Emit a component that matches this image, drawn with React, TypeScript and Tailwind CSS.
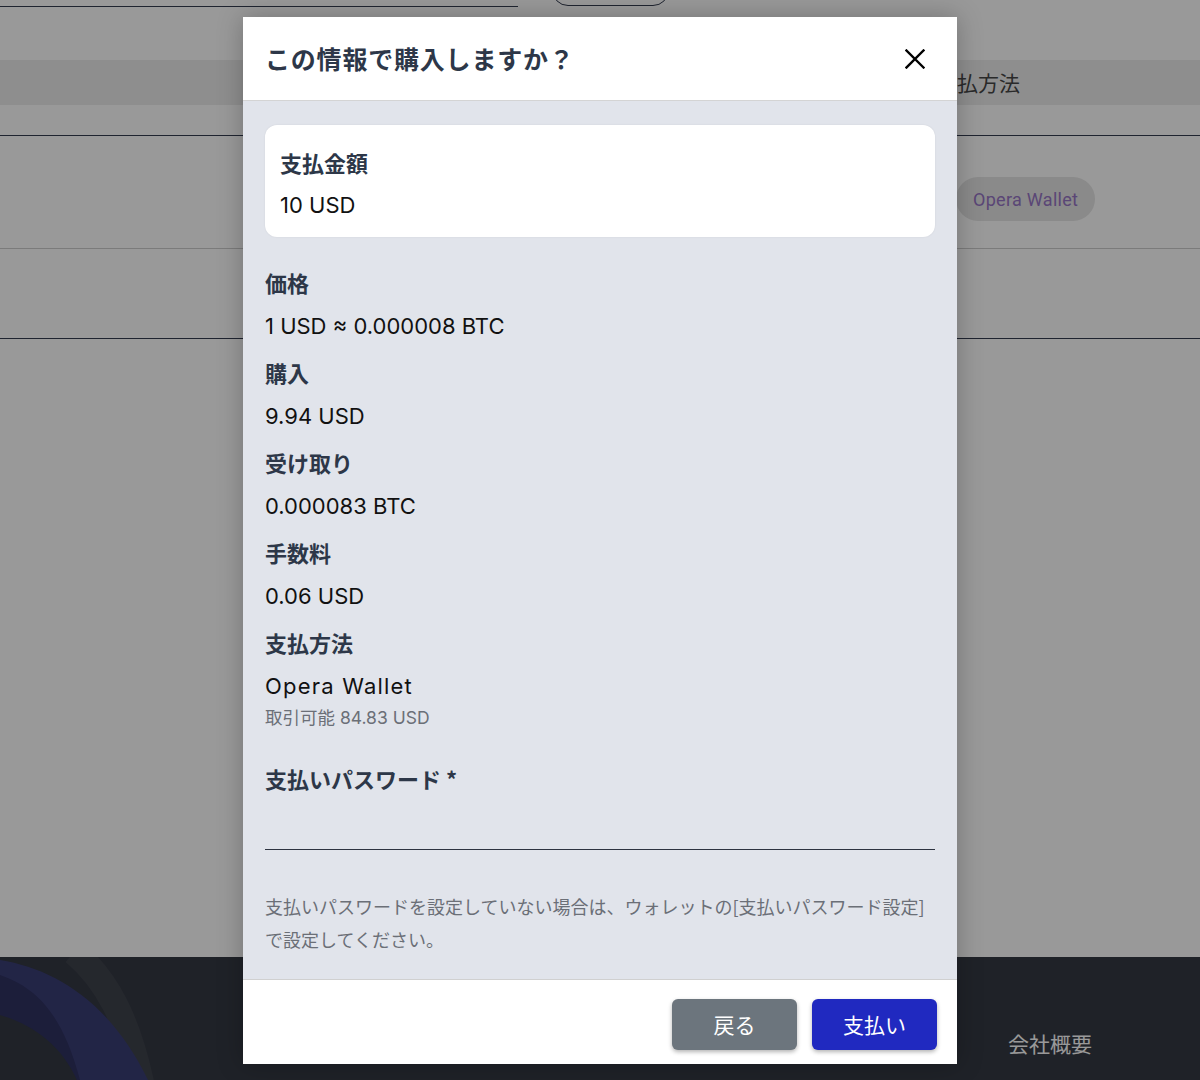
import React from "react";

const jp = "font-['Noto_Sans_CJK_JP',sans-serif]";
const val = "font-['Inter','Noto_Sans_CJK_JP',sans-serif]";

function Item({ label, value }: { label: string; value: string }) {
  return (
    <div className="flex flex-col">
      <div className={`${jp} text-[22px] leading-[30px] font-bold text-[#2d3748]`}>{label}</div>
      <div className={`${val} mt-[14px] text-[22px] leading-[30px] text-[#111111]`}>{value}</div>
    </div>
  );
}

export default function App() {
  return (
    <div className="relative h-[1080px] w-[1200px] overflow-hidden bg-white">
      {/* background page */}
      <main className="flex h-[957px] flex-col">
        <div className="flex h-[60px] items-start">
          <div className="h-[7px] w-[518px] border-b-[1.5px] border-[#343c50]" />
          <div className="ml-[34px] mt-[-34px] h-[40px] w-[117px] rounded-[16px] border-[1.5px] border-[#343c50]" />
        </div>
        <div className={`${jp} flex h-[45px] items-center bg-[#ededed] pl-[936px] text-[21px] text-[#474747]`}>
          支払方法
        </div>
        <div className="h-[30px]" />
        <div className="flex h-[113px] items-start border-t-[1.5px] border-[#343c50]">
          <div className="ml-[956px] mt-[41px] flex h-[44px] items-center rounded-full bg-[#e6e6e6] px-[17px] font-['Roboto',sans-serif] text-[18px] tracking-[0.3px] text-[#9675c5]">
            Opera Wallet
          </div>
        </div>
        <div className="h-[90px] border-t-[1.5px] border-[#cdcdcd]" />
        <div className="border-t-[1.5px] border-[#343c50]" />
      </main>
      <footer className="relative h-[123px] bg-[#343944]">
        <svg className="absolute left-0 top-0" width="260" height="123" viewBox="0 0 260 123">
          <path d="M74 -5 C106 22 128 62 142 130" stroke="#3f434c" strokeWidth="26" fill="none" />
          <path d="M0 3 C55 12 110 45 148 123 L0 123 Z" fill="#3a3e76" />
          <path d="M0 18 C35 30 62 55 80 123 L0 123 Z" fill="#2f3262" />
          <path d="M0 58 C35 68 62 90 77 123 L0 123 Z" fill="#343944" />
        </svg>
        <div className={`${jp} relative flex h-full items-center pl-[1008px] pt-[50px] text-[21px] text-white`}>
          会社概要
        </div>
      </footer>

      {/* overlay */}
      <div className="absolute inset-0 bg-black/40" />

      {/* modal */}
      <div className="absolute left-[243px] top-[17px] flex w-[714px] flex-col overflow-hidden bg-white shadow-[0_0_24px_rgba(0,0,0,0.25)]">
        <div className="flex h-[84px] items-center justify-between border-b-[1.5px] border-[#d4d4d4] pl-[22px] pr-[32px]">
          <div className={`${jp} text-[25px] font-bold tracking-[0.8px] text-[#2d3748]`}>この情報で購入しますか？</div>
          <svg width="20" height="20" viewBox="0 0 20 20">
            <path d="M1.5 1.5 L18.5 18.5 M18.5 1.5 L1.5 18.5" stroke="#000" strokeWidth="2.4" strokeLinecap="square" />
          </svg>
        </div>
        <div className="flex flex-col bg-[#e1e4eb] px-[22px] pb-[23px] pt-[24px]">
          <div className="flex flex-col rounded-[12px] bg-white px-[15px] pb-[17px] pt-[22px] shadow-[0_0_2px_rgba(0,0,0,0.08)]">
            <div className={`${jp} text-[22px] leading-[30px] font-bold text-[#2d3748]`}>支払金額</div>
            <div className={`${val} mt-[13px] text-[22px] leading-[30px] text-[#111111]`}>10 USD</div>
          </div>
          <div className="mt-[30px] flex flex-col gap-[16px]">
            <Item label="価格" value="1 USD ≈ 0.000008 BTC" />
            <Item label="購入" value="9.94 USD" />
            <Item label="受け取り" value="0.000083 BTC" />
            <Item label="手数料" value="0.06 USD" />
            <div className="flex flex-col">
              <div className={`${jp} text-[22px] leading-[30px] font-bold text-[#2d3748]`}>支払方法</div>
              <div className={`${val} mt-[14px] text-[22px] leading-[30px] tracking-[1.2px] text-[#111111]`}>Opera Wallet</div>
              <div className={`${val} mt-[2px] text-[17.5px] leading-[30px] text-[#6b6f77]`}>取引可能 84.83 USD</div>
            </div>
          </div>
          <div className={`${jp} mt-[30px] text-[22px] leading-[30px] font-bold text-[#2d3748]`}>支払いパスワード *</div>
          <div className="h-[57px] border-b-[1.5px] border-[#2d3340]" />
          <div className={`${jp} mt-[40px] text-[18px] leading-[33px] text-[#6b6f77]`}>
            支払いパスワードを設定していない場合は、ウォレットの[支払いパスワード設定]
            <br />
            で設定してください。
          </div>
        </div>
        <div className="flex h-[85px] items-start justify-end gap-[15px] border-t-[1.5px] border-[#d0d0d0] pr-[20px] pt-[19px]">
          <div className={`${jp} flex h-[51px] w-[125px] items-center justify-center rounded-[6px] bg-[#6c757d] text-[21px] text-white shadow-[0_2px_4px_rgba(0,0,0,0.3)]`}>
            戻る
          </div>
          <div className={`${jp} flex h-[51px] w-[125px] items-center justify-center rounded-[6px] bg-[#2029c0] text-[21px] text-white shadow-[0_2px_4px_rgba(0,0,0,0.3)]`}>
            支払い
          </div>
        </div>
      </div>
    </div>
  );
}
